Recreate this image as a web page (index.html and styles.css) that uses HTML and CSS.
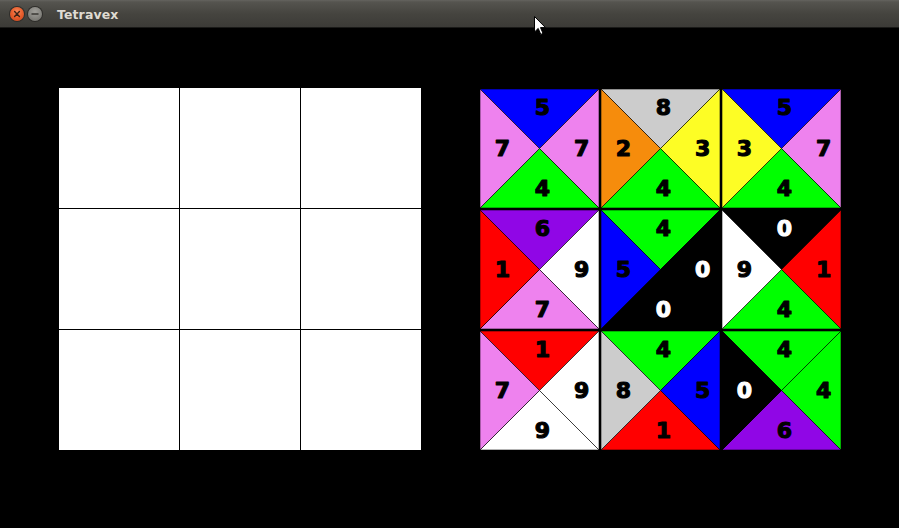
FILE: index.html
```html
<!DOCTYPE html>
<html>
<head>
<meta charset="utf-8">
<title>Tetravex</title>
<link rel="stylesheet" href="styles.css">
</head>
<body>
<div class="window">
  <div class="titlebar">
    <div class="btn close"><svg width="14" height="14" viewBox="0 0 14 14"><path d="M4.6 4.6 L9.4 9.4 M9.4 4.6 L4.6 9.4" stroke="#3b2316" stroke-width="1.4" stroke-linecap="round"/></svg></div>
    <div class="btn minimize"><svg width="14" height="14" viewBox="0 0 14 14"><path d="M4 7 H10" stroke="#3a3935" stroke-width="1.5" stroke-linecap="round"/></svg></div>
    <div class="title">Tetravex</div>
  </div>
  <div class="content">
    <div class="board empty">
      <div class="cell"></div><div class="cell"></div><div class="cell"></div>
      <div class="cell"></div><div class="cell"></div><div class="cell"></div>
      <div class="cell"></div><div class="cell"></div><div class="cell"></div>
    </div>
    <div class="board tiles" id="tiles"></div>
  </div>
  <svg class="cursor" width="13" height="20" viewBox="0 0 13 20"><path d="M0.5 0.5 L0.5 16 L4.2 12.4 L6.8 18.4 L9 17.4 L6.5 11.6 L11.5 11.6 Z" fill="#fff" stroke="#000" stroke-width="1"/></svg>
</div>
<script src="app.js"></script>
</body>
</html>
```
FILE: styles.css
```css
html, body {
  margin: 0;
  padding: 0;
  background: #000;
}
.window {
  position: relative;
  width: 899px;
  height: 528px;
  background: #000;
  overflow: hidden;
}
.titlebar {
  height: 27px;
  border-bottom: 1px solid #1a1a18;
  background: linear-gradient(#64635f 0px, #55544f 2px, #45443f 14px, #3c3b37 27px);
  display: flex;
  align-items: center;
  padding-left: 10px;
  box-sizing: content-box;
}
.btn {
  width: 14px;
  height: 14px;
  border-radius: 50%;
  display: flex;
  align-items: center;
  justify-content: center;
  margin-top: 1px;
}
.btn svg { display: block; }
.close {
  background: radial-gradient(circle at 50% 35%, #f68a5e 0%, #e9602e 45%, #c7421a 100%);
  box-shadow: 0 0 0 1px #2e2d2a;
}
.minimize {
  margin-left: 4px;
  background: radial-gradient(circle at 50% 35%, #a09f9a 0%, #8a8984 45%, #6b6a65 100%);
  box-shadow: 0 0 0 1px #2e2d2a;
}
.title {
  margin-left: 15px;
  margin-top: 1px;
  font-family: "DejaVu Sans", sans-serif;
  font-weight: bold;
  font-size: 12.5px;
  color: #dfdbd2;
  letter-spacing: 0.1px;
}
.content {
  display: flex;
  align-items: flex-start;
  padding: 60px 0 0 59px;
  gap: 59px;
}
.board {
  display: grid;
  background: #000;
}
.empty {
  grid-template-columns: repeat(3, 120px);
  grid-template-rows: repeat(3, 120px);
  gap: 1px;
}
.cell {
  background: #fff;
}
.tiles {
  margin-top: 1px;
  grid-template-columns: repeat(3, 119px);
  grid-template-rows: repeat(3, 119px);
  gap: 2px;
}
.tile {
  display: block;
  width: 119px;
  height: 119px;
}
.tile text {
  font-family: "DejaVu Sans", sans-serif;
  font-weight: bold;
  font-size: 22px;
  text-anchor: middle;
  stroke-width: 1.1px;
  stroke-linejoin: round;
}
.cursor {
  position: absolute;
  left: 534px;
  top: 16px;
}
```
FILE: app.js
```js
var colors = ["#000000", "#ff0000", "#f68c0c", "#fdfd25", "#00ff00", "#0000ff", "#9006e6", "#ee82ee", "#cccccc", "#ffffff"];
// top, right, bottom, left
var tiles = [
  [5, 7, 4, 7], [8, 3, 4, 2], [5, 7, 4, 3],
  [6, 9, 7, 1], [4, 0, 0, 5], [0, 1, 4, 9],
  [1, 9, 9, 7], [4, 5, 1, 8], [4, 4, 6, 0]
];
var S = 119, C = 59.5;
var tris = [
  "0,0 " + S + ",0 " + C + "," + C,
  S + ",0 " + S + "," + S + " " + C + "," + C,
  "0," + S + " " + S + "," + S + " " + C + "," + C,
  "0,0 0," + S + " " + C + "," + C
];
var pos = [[62.5, 18], [101.7, 58.5], [62.5, 98.7], [22.5, 58.5]];
var html = "";
tiles.forEach(function (t) {
  var s = '<svg class="tile" viewBox="0 0 119 119" width="119" height="119">';
  for (var i = 0; i < 4; i++) {
    s += '<polygon points="' + tris[i] + '" fill="' + colors[t[i]] + '" stroke="#000" stroke-width="0.6"/>';
  }
  for (var j = 0; j < 4; j++) {
    var fill = t[j] === 0 ? "#fff" : "#000";
    s += '<text x="' + pos[j][0] + '" y="' + (pos[j][1] + 8.1) + '" fill="' + fill + '" stroke="' + fill + '">' + t[j] + '</text>';
  }
  s += '</svg>';
  html += s;
});
document.getElementById("tiles").innerHTML = html;
```
